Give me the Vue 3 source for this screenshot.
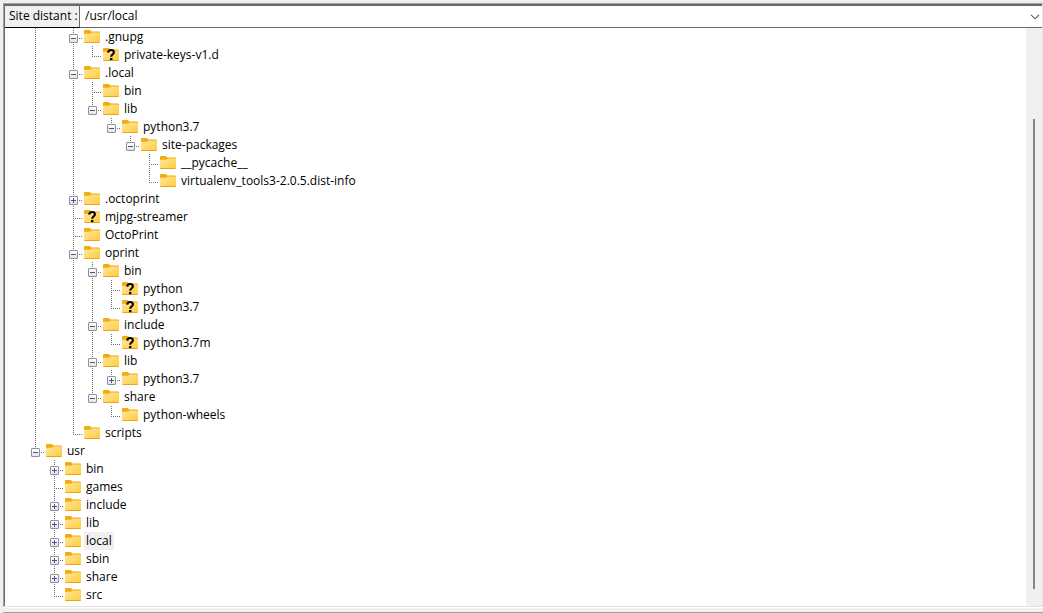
<script setup>
const source = [
  [2, '.gnupg', '-'],
  [3, 'private-keys-v1.d', '', true],
  [2, '.local', '-'],
  [3, 'bin', ''],
  [3, 'lib', '-'],
  [4, 'python3.7', '-'],
  [5, 'site-packages', '-'],
  [6, '__pycache__', ''],
  [6, 'virtualenv_tools3-2.0.5.dist-info', ''],
  [2, '.octoprint', '+'],
  [2, 'mjpg-streamer', '', true],
  [2, 'OctoPrint', ''],
  [2, 'oprint', '-'],
  [3, 'bin', '-'],
  [4, 'python', '', true],
  [4, 'python3.7', '', true],
  [3, 'include', '-'],
  [4, 'python3.7m', '', true],
  [3, 'lib', '-'],
  [4, 'python3.7', '+'],
  [3, 'share', '-'],
  [4, 'python-wheels', ''],
  [2, 'scripts', ''],
  [0, 'usr', '-'],
  [1, 'bin', '+'],
  [1, 'games', ''],
  [1, 'include', '+'],
  [1, 'lib', '+'],
  [1, 'local', '+'],
  [1, 'sbin', '+'],
  [1, 'share', '+'],
  [1, 'src', '']
]

// True when another sibling at this level follows before the parent ends.
function continues(index, level) {
  for (let i = index + 1; i < source.length; i++) {
    if (source[i][0] === level) return true
    if (source[i][0] < level) return false
  }
  return false
}

const rows = source.map(([level, name, toggle, unknown], i) => ({
  level,
  name,
  toggle,
  unknown,
  selected: name === 'local',
  guides: Array.from({ length: level }, (_, l) => continues(i, l)),
  last: !continues(i, level)
}))
</script>

<template>
  <div class="app">
    <main class="pane">
      <header class="bar">
        <label class="caption" for="path">Site distant :</label>
        <div class="combo">
          <input id="path" class="path" type="text" value="/usr/local" />
          <button class="drop" type="button" aria-label="Historique">
            <svg width="10" height="6" viewBox="0 0 10 6"><path d="M1 .8 5 4.8 9 .8" fill="none" stroke="#555" stroke-width="1.1" /></svg>
          </button>
        </div>
      </header>
      <div class="body">
        <ul class="tree" role="tree">
          <li v-for="(row, i) in rows" :key="i" class="row" role="treeitem" :aria-level="row.level + 1">
            <span v-for="(on, g) in row.guides" :key="g" class="cell" :class="{ line: on }"></span>
            <span class="cell branch" :class="row.last ? 'half' : 'line'">
              <button v-if="row.toggle" class="toggle" type="button" :aria-label="row.name">
                <svg width="9" height="9" viewBox="0 0 9 9" shape-rendering="crispEdges">
                  <path d="M2 4h5v1H2z" fill="#3b57a4" />
                  <path v-if="row.toggle === '+'" d="M4 2h1v5H4z" fill="#3b57a4" />
                </svg>
              </button>
            </span>
            <svg class="folder" width="16" height="14" viewBox="0 0 16 14">
              <defs>
                <linearGradient :id="'f' + i" x1="0" y1="0" x2="1" y2="1">
                  <stop offset="0" stop-color="#ffe79c" />
                  <stop offset="1" stop-color="#ffcb3d" />
                </linearGradient>
              </defs>
              <path d="M0 1.2Q0 0 1.2 0H5.6L7.6 1.6H14.8Q16 1.6 16 2.8V8H0Z" fill="#f2ac0c" />
              <path d="M0 4.6Q0 3.8.8 3.8H5.8L8 2.6H15.2Q16 2.6 16 3.4V12Q16 13 15 13H1Q0 13 0 12Z" :fill="`url(#f${i})`" />
              <path d="M.4 12.5H15.6" stroke="#e9a51c" />
              <path v-if="row.unknown" d="M5.2 4.6C5.3 2.8 6.4 2 8 2C9.8 2 10.9 2.9 10.9 4.4C10.9 6.2 8.3 6.4 8.2 8.7" fill="none" stroke="#000" stroke-width="2.1" />
              <path v-if="row.unknown" d="M7 10h2.4v2.2H7z" fill="#000" />
            </svg>
            <span class="name" :class="{ selected: row.selected }">{{ row.name }}</span>
          </li>
        </ul>
        <div class="scroll"><div class="thumb"></div></div>
      </div>
    </main>
    <div class="splitter"></div>
  </div>
</template>

<style>
body { background: #f0f0f0; }
</style>

<style scoped>
.app {
  box-sizing: border-box;
  height: 100vh;
  padding: 3px 0 0 3px;
  display: flex;
  flex-direction: column;
  font: 12px/18px "Open Sans", "Noto Sans", sans-serif;
  color: #000;
}
.pane {
  flex: 1;
  min-height: 0;
  display: flex;
  flex-direction: column;
  border: 1px solid #a0a0a0;
  border-right-color: #e3e3e3;
  border-bottom-color: #e3e3e3;
  background: #fff;
}
.bar {
  display: flex;
  height: 24px;
  box-sizing: border-box;
  border: 0 solid #696969;
  border-width: 2px 0 1px 1px;
}
.caption {
  box-sizing: border-box;
  width: 75px;
  margin-bottom: -1px;
  padding-left: 4px;
  line-height: 19px;
  white-space: nowrap;
  background: #f0f0f0;
  border-right: 1px solid #696969;
  border-bottom: 1px solid #000;
}
.combo { flex: 1; display: flex; }
.path {
  flex: 1;
  min-width: 0;
  padding: 0 5px 2px;
  border: 0;
  outline: 0;
  background: #fff;
  font: inherit;
  color: inherit;
}
.drop {
  width: 14px;
  padding: 0;
  border: 0;
  background: #fff;
  display: grid;
  place-items: center;
}
.body {
  flex: 1;
  min-height: 0;
  display: flex;
  border-left: 1px solid #696969;
}
.tree {
  flex: 1;
  margin: 0;
  padding: 0 0 0 21px;
  list-style: none;
  overflow: hidden;
}
.row { display: flex; height: 18px; }
.cell {
  flex: none;
  position: relative;
  width: 19px;
  height: 18px;
}
.line, .half {
  background: repeating-linear-gradient(to bottom, #707070 0 1px, transparent 1px 2px) 9px 0 / 1px 100% no-repeat;
}
.half { background-size: 1px 11px; }
.branch::after {
  content: "";
  position: absolute;
  top: 10px;
  left: 9px;
  right: 0;
  height: 1px;
  background: repeating-linear-gradient(to right, #707070 0 1px, transparent 1px 2px);
}
.toggle {
  position: absolute;
  z-index: 1;
  top: 6px;
  left: 5px;
  width: 9px;
  height: 9px;
  padding: 0;
  border: 1px solid #919191;
  border-radius: 1px;
  background: linear-gradient(#fff, #e4e4e4);
}
.toggle svg { display: block; margin: -1px; }
.folder { flex: none; margin: 2px 3px 0 1px; }
.name { padding: 0 2px; white-space: nowrap; }
.selected { background: #f0f0f0; }
.scroll {
  width: 16px;
  box-sizing: border-box;
  padding: 91px 0 17px 7px;
  background: #f0f0f0;
}
.thumb { width: 2px; height: 100%; background: #858585; }
.splitter {
  height: 6px;
  border-top: 1px solid #fff;
  border-bottom: 1px solid #a0a0a0;
  box-sizing: border-box;
}
</style>
